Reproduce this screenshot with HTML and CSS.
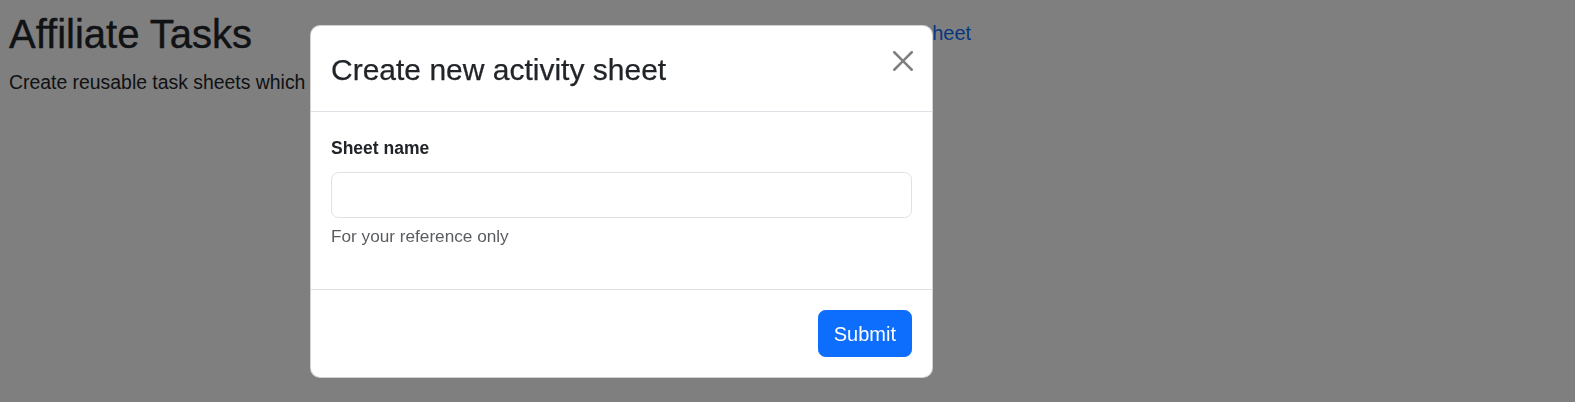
FILE: index.html
```html
<!DOCTYPE html>
<html lang="en">
<head>
<meta charset="utf-8">
<title>Affiliate Tasks</title>
<link rel="stylesheet" href="styles.css">
</head>
<body>
<div class="page">
  <div class="page-header">
    <div class="intro">
      <h2 class="page-title">Affiliate Tasks</h2>
      <p class="lead-text">Create reusable task sheets which</p>
    </div>
    <a class="btn-link" href="#">Add sheet</a>
  </div>
</div>

<div class="backdrop"></div>

<div class="modal">
  <div class="modal-header">
    <h5 class="modal-title">Create new activity sheet</h5>
    <button class="btn-close" type="button" aria-label="Close">
      <svg viewBox="0 0 16 16" width="20" height="20" aria-hidden="true"><path d="M.293.293a1 1 0 0 1 1.414 0L8 6.586 14.293.293a1 1 0 1 1 1.414 1.414L9.414 8l6.293 6.293a1 1 0 0 1-1.414 1.414L8 9.414l-6.293 6.293a1 1 0 0 1-1.414-1.414L6.586 8 .293 1.707a1 1 0 0 1 0-1.414z"/></svg>
    </button>
  </div>
  <div class="modal-body">
    <div class="form-group">
      <label class="form-label" for="sheet-name">Sheet name</label>
      <input class="form-control" id="sheet-name" type="text">
      <div class="form-text">For your reference only</div>
    </div>
  </div>
  <div class="modal-footer">
    <button class="btn-primary" type="button">Submit</button>
  </div>
</div>
</body>
</html>
```
FILE: styles.css
```css
* { box-sizing: border-box; }

html, body {
  margin: 0;
  padding: 0;
  background: #fff;
}

body {
  font-family: "Liberation Sans", Arial, sans-serif;
  font-size: 20px;
  line-height: 1.5;
  color: #212529;
}

.page {
  padding: 10px 0 0 9px;
}

.page-header {
  display: flex;
  align-items: flex-start;
}

.intro {
  width: 856px;
}

.page-title {
  margin: 0 0 9px;
  font-size: 40px;
  font-weight: 500;
  line-height: 1.2;
  -webkit-text-stroke: 0.4px #212529;
}

.lead-text {
  margin: 0;
  font-size: 19.4px;
  line-height: 30px;
  white-space: nowrap;
}

.btn-link {
  display: inline-block;
  margin-top: -1px;
  padding: 7.5px 15px;
  border: 1px solid transparent;
  color: #0d6efd;
  text-decoration: none;
  line-height: 30px;
  font-size: 20px;
}

.backdrop {
  position: fixed;
  inset: 0;
  background: #000;
  opacity: 0.5;
}

.modal {
  position: absolute;
  left: 310px;
  top: 25px;
  width: 623px;
  background: #fff;
  border: 1px solid rgba(0, 0, 0, 0.175);
  border-radius: 10px;
  display: flex;
  flex-direction: column;
}

.modal-header {
  display: flex;
  align-items: flex-start;
  padding: 20px;
  border-bottom: 1px solid #dee2e6;
}

.modal-title {
  margin: 0;
  padding-top: 2px;
  font-size: 30px;
  font-weight: 500;
  line-height: 43px;
  -webkit-text-stroke: 0.25px #212529;
}

.btn-close {
  margin: 0 -6px 0 auto;
  padding: 5px;
  width: 30px;
  height: 30px;
  border: 0;
  background: transparent;
  opacity: 0.5;
  display: flex;
  align-items: center;
  justify-content: center;
}

.btn-close svg {
  display: block;
  fill: #000;
}

.modal-body {
  padding: 20px;
}

.form-group {
  margin-bottom: 20px;
}

.form-label {
  display: block;
  margin-bottom: 10px;
  padding-top: 2px;
  font-size: 17.5px;
  font-weight: 700;
  line-height: 28px;
}

.form-control {
  display: block;
  width: 100%;
  height: 46px;
  padding: 7px 15px;
  font: inherit;
  color: #212529;
  background: #fff;
  border: 1px solid #dee2e6;
  border-radius: 7.5px;
}

.form-text {
  margin-top: 5px;
  font-size: 17.2px;
  line-height: 26.25px;
  color: rgba(33, 37, 41, 0.75);
}

.modal-footer {
  display: flex;
  justify-content: flex-end;
  align-items: center;
  padding: 15px;
  border-top: 1px solid #dee2e6;
}

.btn-primary {
  margin: 5px;
  padding: 7.5px 15px;
  font: inherit;
  font-size: 20px;
  line-height: 30px;
  color: #fff;
  background: #0d6efd;
  border: 1px solid #0d6efd;
  border-radius: 7.5px;
}
```
